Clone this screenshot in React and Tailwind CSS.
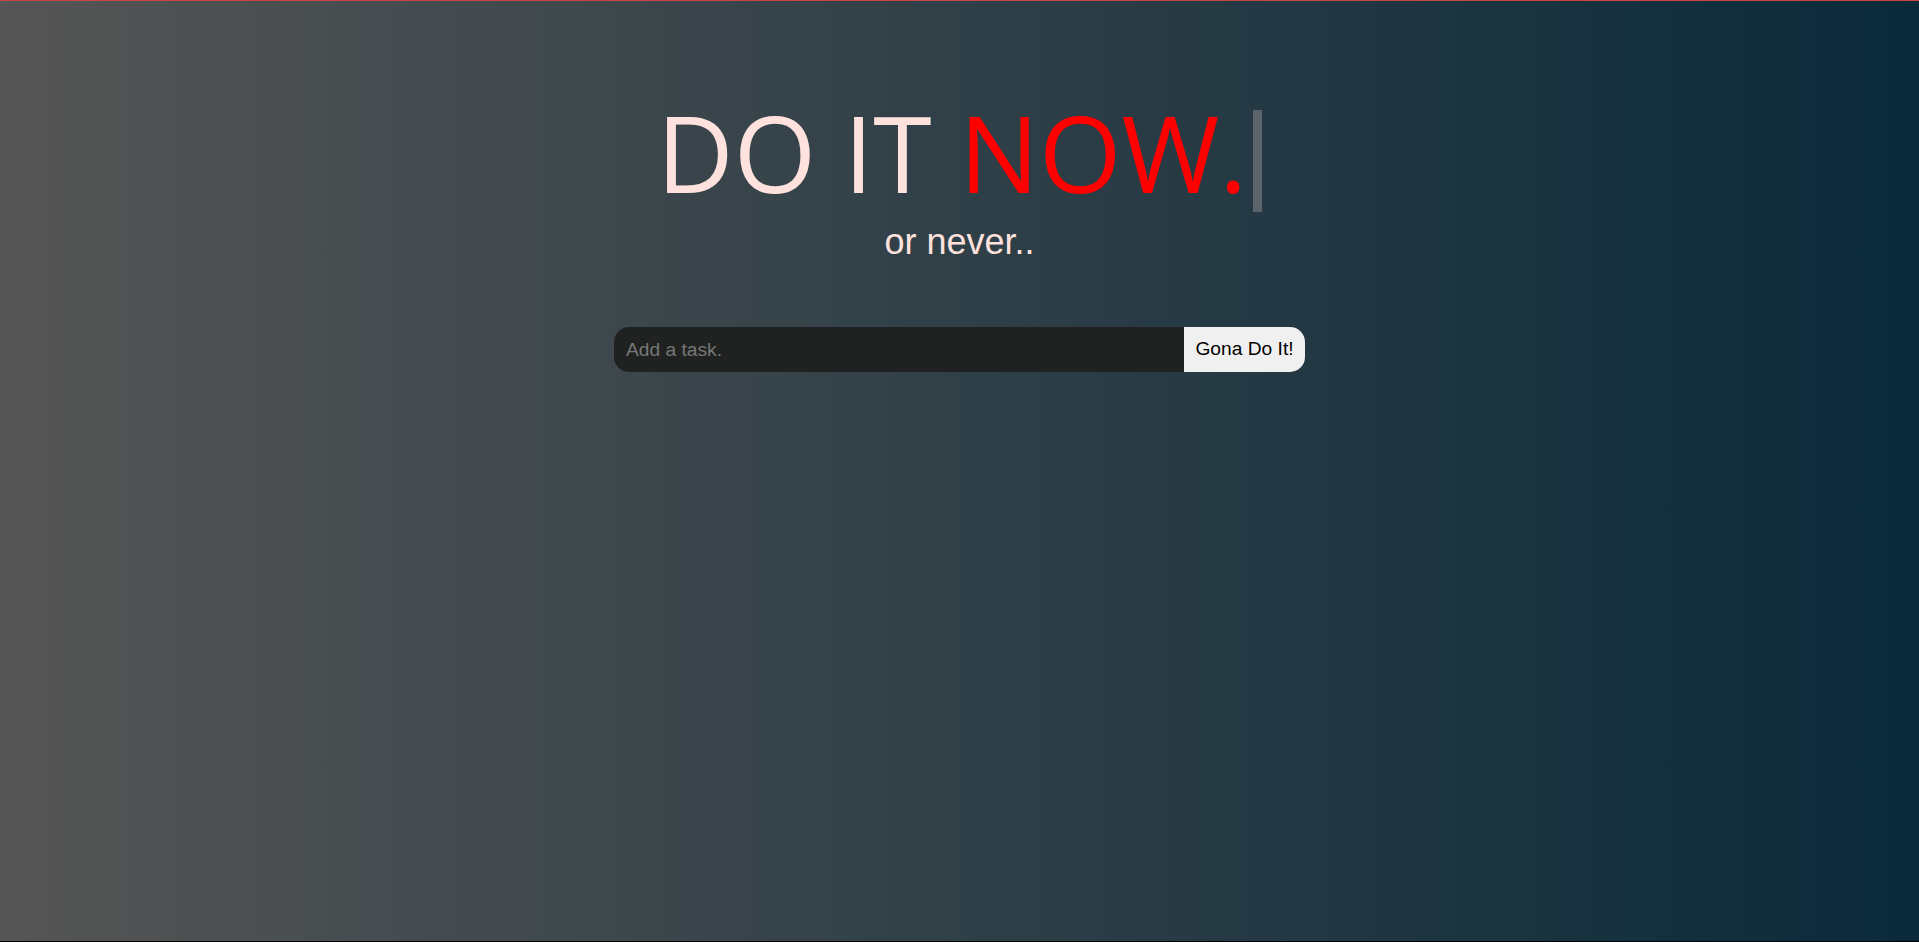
import React, { useState } from "react";

function App() {
  const [task, setTask] = useState("");

  return (
    <div className="h-screen w-full border-t border-t-[#c94444] border-b border-b-black bg-[linear-gradient(to_right,#555555,#0a2a3a)] font-['Liberation_Sans',Arial,sans-serif]">
      <header className="flex flex-col items-center pt-[98px]">
        <div className="flex items-start">
          <h1 className="text-[106px] leading-none font-normal text-[#ffe1dd] font-['Open_Sans',sans-serif]">
            DO IT <span className="text-[#ff0000]">NOW.</span>
          </h1>
          <span className="mt-[11px] ml-[6px] w-[9px] h-[102px] bg-[#5b636b]" />
        </div>
        <p className="mt-3 text-[36px] leading-none text-[#ffe1dd]">or never..</p>
      </header>

      <form
        className="mt-[67px] flex justify-center"
        onSubmit={(e) => {
          e.preventDefault();
          setTask("");
        }}
      >
        <input
          type="text"
          value={task}
          onChange={(e) => setTask(e.target.value)}
          placeholder="Add a task."
          className="w-[570px] h-[45px] rounded-l-[15px] bg-[#202221] pl-3 text-[19.2px] text-white placeholder:text-[#777777] outline-none"
        />
        <button
          type="submit"
          className="w-[121px] h-[45px] rounded-r-[15px] bg-[#f0f0f0] text-[19.2px] text-black"
        >
          Gona Do It!
        </button>
      </form>
    </div>
  );
}

export default App;
